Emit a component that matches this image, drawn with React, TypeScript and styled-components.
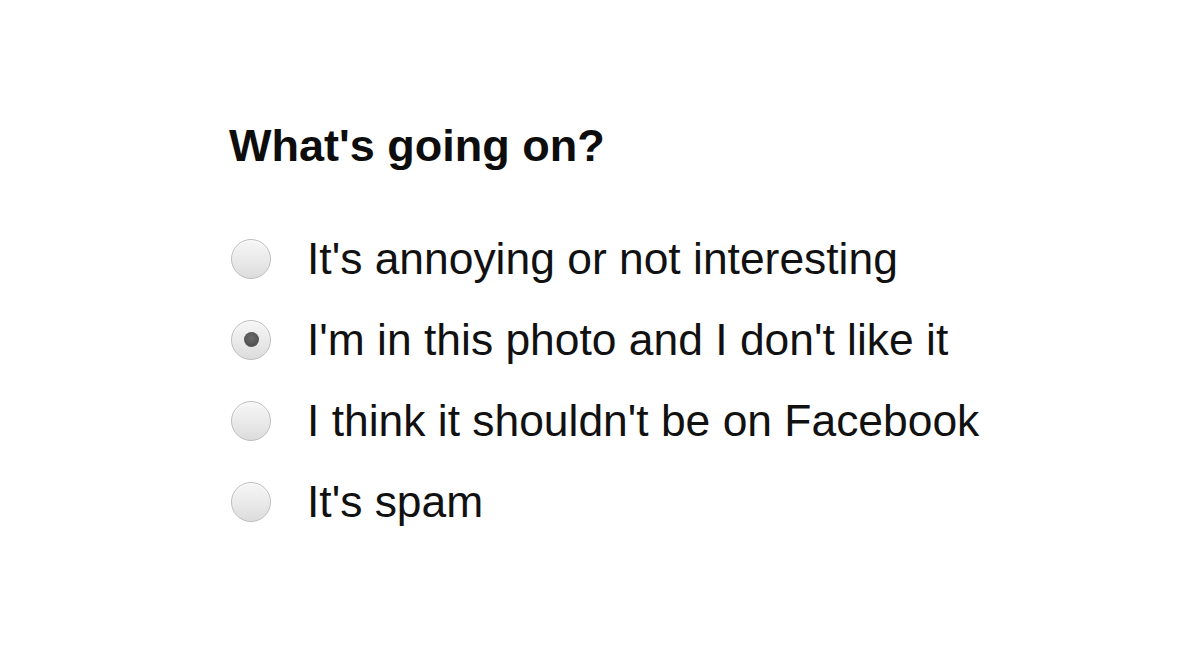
import { useState } from 'react'
import styled, { createGlobalStyle } from 'styled-components'

const GlobalStyle = createGlobalStyle`
  html, body {
    margin: 0;
    padding: 0;
    background: #ffffff;
  }

  body {
    font-family: 'Liberation Sans', Arial, sans-serif;
    color: #111111;
  }
`

const Page = styled.main`
  width: 1200px;
  height: 655px;
  padding: 120px 0 0 229px;
  box-sizing: border-box;
`

const Heading = styled.h2`
  margin: 0 0 46px;
  font-size: 45px;
  line-height: 52px;
  font-weight: 700;
  color: #0d0d0d;
`

const Options = styled.div`
  display: flex;
  flex-direction: column;
`

const Option = styled.label`
  display: flex;
  align-items: center;
  gap: 36px;
  height: 81px;
  font-size: 44.4px;
  line-height: 81px;
  color: #111111;
  cursor: pointer;
`

const HiddenInput = styled.input`
  display: none;
`

const Radio = styled.span<{ $checked: boolean }>`
  position: relative;
  flex: none;
  width: 38px;
  height: 38px;
  margin-left: 2px;
  border-radius: 50%;
  border: 1px solid #bdbdbd;
  background: linear-gradient(180deg, #f6f6f6 0%, #e9e9e9 55%, #dcdcdc 100%);
  box-shadow: inset 0 1px 1px rgba(255, 255, 255, 0.8);

  &::after {
    content: '';
    display: ${({ $checked }) => ($checked ? 'block' : 'none')};
    position: absolute;
    left: 50%;
    top: 50%;
    width: 15px;
    height: 15px;
    margin: -7.5px 0 0 -7.5px;
    border-radius: 50%;
    background: radial-gradient(circle at 50% 40%, #6a6a6a 0%, #555555 60%, #4a4a4a 100%);
  }
`

const reasons = [
  "It's annoying or not interesting",
  "I'm in this photo and I don't like it",
  "I think it shouldn't be on Facebook",
  "It's spam",
]

export default function App() {
  const [selected, setSelected] = useState(1)

  return (
    <>
      <GlobalStyle />
      <Page>
        <Heading>What's going on?</Heading>

        <Options>
          {reasons.map((reason, i) => (
            <Option key={reason}>
              <HiddenInput
                type="radio"
                name="reason"
                checked={selected === i}
                onChange={() => setSelected(i)}
              />
              <Radio $checked={selected === i} />
              {reason}
            </Option>
          ))}
        </Options>
      </Page>
    </>
  )
}
